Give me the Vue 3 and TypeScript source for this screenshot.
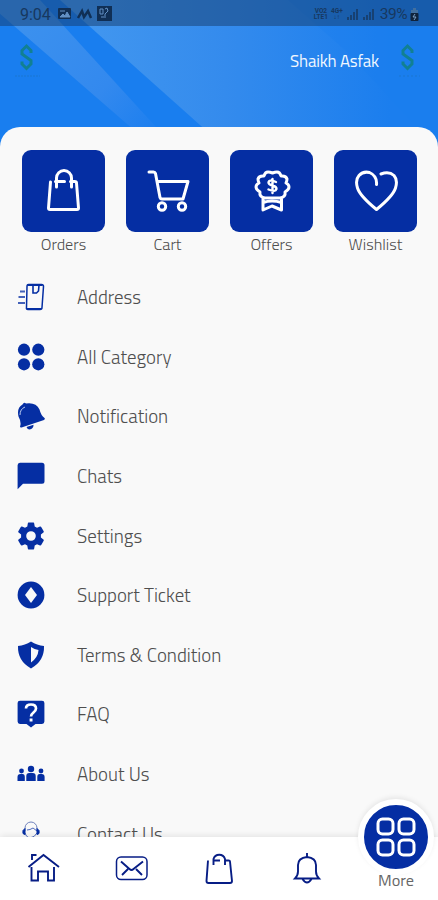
<script setup lang="ts">
interface Item {
  icon: string
  label: string
}

const tiles: Item[] = [
  { icon: 'bag', label: 'Orders' },
  { icon: 'cart', label: 'Cart' },
  { icon: 'offer', label: 'Offers' },
  { icon: 'heart', label: 'Wishlist' },
]

const rows: Item[] = [
  { icon: 'address', label: 'Address' },
  { icon: 'category', label: 'All Category' },
  { icon: 'notify', label: 'Notification' },
  { icon: 'chat', label: 'Chats' },
  { icon: 'settings', label: 'Settings' },
  { icon: 'support', label: 'Support Ticket' },
  { icon: 'terms', label: 'Terms & Condition' },
  { icon: 'faq', label: 'FAQ' },
  { icon: 'about', label: 'About Us' },
  { icon: 'contact', label: 'Contact Us' },
]
</script>

<template>
  <main class="screen">
    <header class="hero">
      <svg class="backdrop" viewBox="0 0 438 150" preserveAspectRatio="none">
        <defs>
          <linearGradient id="sheen" gradientUnits="userSpaceOnUse" x1="90" y1="0" x2="390" y2="0">
            <stop offset="0" stop-color="#4196ef" />
            <stop offset=".45" stop-color="#348bed" />
            <stop offset="1" stop-color="#1b7eee" />
          </linearGradient>
          <linearGradient id="band" gradientUnits="userSpaceOnUse" x1="20" y1="20" x2="145" y2="130">
            <stop offset="0" stop-color="#3c91ee" />
            <stop offset=".65" stop-color="#3389ee" />
            <stop offset="1" stop-color="#1f80ef" />
          </linearGradient>
        </defs>
        <rect width="438" height="150" fill="#197eef" />
        <path d="M-16 0H40L177 150H157Z" fill="url(#band)" />
        <path d="M60 0H438V150H228Z" fill="url(#sheen)" />
        <path d="M288 0H438V150Q385 93 345 50Z" fill="#1b7eee" opacity=".35" />
      </svg>
      <div class="status">
        <span class="clock">9:04</span>
        <svg class="notices" width="52" height="16" viewBox="0 0 52 16">
          <rect x="1" y="2" width="13" height="11" rx="1" fill="#102f55" />
          <path d="M3 11l3-3 2 2 2-4 3 5zM3 5h5" fill="#6290c4" stroke="#6290c4" />
          <path d="M21 12l4-7 2 6 4-6 3 7" fill="none" stroke="#102f55" stroke-width="2.500" />
          <rect x="40" y="0" width="15" height="15" fill="#102f55" />
          <path d="M43 3v5h3V3h-3M48 3l2-1 1 3-3 3v4M44 11h3" fill="none" stroke="#6290c4" />
        </svg>
        <div class="signals">
          <span class="network"><i>VO2</i><i>LTE1</i></span>
          <span class="network"><i>4G+</i><i>↓↑</i></span>
          <svg width="28" height="14" viewBox="0 0 28 14" fill="none" stroke="#17385f" stroke-width="1.500">
            <path d="M2 13v-3M5 13V8M8 13V5M11 13V2M18 13v-3M21 13V8M24 13V5M27 13V2" />
          </svg>
          <span class="percent">39%</span>
          <svg width="9" height="13" viewBox="0 0 9 13">
            <path d="M3 0h3v2h2v3H1V2h2z" fill="#416f9f" />
            <rect x=".5" y="5" width="8" height="8" rx="1" fill="#10233b" />
            <path d="M5 6L3 9h3l-2 3" stroke="#7ba0c6" fill="none" />
          </svg>
        </div>
      </div>
      <div class="profile">
        <svg class="logo" width="30" height="38" viewBox="0 0 30 38">
          <path d="M19 11V8.500L14.500 4 10 8.500V12l9 6.500V22l-4.500 4.500L10 22v-2.500" fill="none" stroke="#118093" stroke-width="3" />
          <path d="M3 34H28" stroke="#1b72bb" stroke-dasharray="2 1" opacity=".55" />
        </svg>
        <span class="name">Shaikh Asfak</span>
        <svg class="logo" width="30" height="38" viewBox="0 0 30 38">
          <path d="M19 11V8.500L14.500 4 10 8.500V12l9 6.500V22l-4.500 4.500L10 22v-2.500" fill="none" stroke="#118093" stroke-width="3" />
          <path d="M6 34H27" stroke="#1b72bb" stroke-dasharray="2 2" opacity=".55" />
        </svg>
      </div>
    </header>

    <section class="sheet">
      <div class="tiles">
        <div v-for="tile in tiles" :key="tile.label" class="tile">
          <div class="square">
            <svg width="46" height="46" viewBox="0 0 46 46" class="outline">
              <path v-if="tile.icon === 'bag'" d="M9.500 14L7.500 40q0 1.500 1.500 1.500h27q1.500 0 1.500-1.500l-2-25q0-1.500-2-1.500h-4M15.500 19v-9a7.500 7.500 0 0 1 15 0v9M14.500 13.500h9" />
              <template v-else-if="tile.icon === 'cart'">
                <path d="M4 4h4.500q1.500 0 2 1.500L15 29.500q.5 1.500 2 1.500h21l5-17.500H12" />
                <circle cx="17" cy="38.500" r="3.700" /><circle cx="37" cy="38.500" r="3.700" />
              </template>
              <template v-else-if="tile.icon === 'offer'">
                <path d="M15 8q1-4 4-4 2 0 4.500 1Q26 4 28 4q3 0 4 4 5-.5 6 3 0 2-1 4 3 1.500 3 4t-4 5q1 5-5 6H16q-6-1-5-6-4-2.500-4-5t3-4q-1-2-1-4 1-3.500 6-3z" />
                <path d="M14 31v11l9-4 9.500 4V31M14 34.500q9-3 18.500 0" />
                <path d="M27 14q-7-3-7.500.5 0 2 4 3t4 3.500q-1 3.500-8 .5M23.500 11v14" stroke-width="2.400" />
              </template>
              <path v-else d="M23.500 16.500q.8-8.500-7-12Q10 3 6 7.500 2 12 4.500 20q2.500 8 19 21.500Q40 28 42.500 20 45 12 41 7.500 36 3 28 6" />
            </svg>
          </div>
          <span>{{ tile.label }}</span>
        </div>
      </div>

      <ul class="rows">
        <li v-for="row in rows" :key="row.label">
          <svg width="28" height="28" viewBox="0 0 28 28" class="solid">
            <g v-if="row.icon === 'address'" fill="none" stroke="#052ea3">
              <path d="M11.500 1.500h13q2 0 2 2L25 24.500q0 2-2 2H11q-2 0-1.500-2l.5-21q0-2 1.500-2z" stroke-width="1.500" />
              <path d="M10.500 2h15M10 26h14" stroke-width="1.800" />
              <path d="M16 2v8h3.500l2-2 .5-6" stroke-width="1.600" />
              <path d="M3 8.500h5M1.500 14H8M1 20h7" stroke-width="1.800" opacity=".75" />
            </g>
            <g v-else-if="row.icon === 'category'">
              <circle cx="7" cy="6.700" r="6.100" /><circle cx="21.300" cy="6.700" r="6.100" />
              <circle cx="7" cy="21.300" r="6.100" /><circle cx="21.300" cy="21.300" r="6.100" />
            </g>
            <g v-else-if="row.icon === 'notify'">
              <path d="M5.500 2.500Q7-.5 9 1.500q10-1.500 13.500 6 1.500 6 5 8.500 1 1-.5 2L4.500 25.500q-2 .3-1.300-1.500Q4.500 20 1.500 14.500-.5 6 5.500 2.500z" />
              <path d="M9.500 25l7-2.300q0 4.300-4 4.800-2 0-3-2.500z" />
              <path d="M3 13q0-6 5-8" fill="none" stroke="#b5c6ed" />
            </g>
            <path v-else-if="row.icon === 'chat'" d="M3 .8h22q2.500 0 2.500 2.500v16q0 2.500-2.500 2.500H6L.6 27.300v-24Q.6.8 3 .8z" />
            <path v-else-if="row.icon === 'settings'" fill-rule="evenodd" d="M11.500.5h5q.5 0 .7 1l.5 3 2.300 1.300 3-1.200q.8-.3 1.200.4l2.500 4.300q.4.700-.3 1.200l-2.500 2v3l2.500 2q.7.500.3 1.200L24.200 23q-.4.700-1.200.4l-3-1.200-2.300 1.300-.5 3q-.2 1-.7 1h-5q-.5 0-.7-1l-.5-3L8 22.200l-3 1.200q-.8.300-1.200-.4l-2.500-4.300q-.4-.7.3-1.200l2.500-2v-3l-2.500-2q-.7-.5-.3-1.200L3.800 5q.4-.7 1.200-.4l3 1.200 2.300-1.300.5-3q.2-1 .7-1zM14 9.200a4.800 4.800 0 1 0 0 9.600 4.800 4.800 0 0 0 0-9.600z" />
            <path v-else-if="row.icon === 'support'" fill-rule="evenodd" d="M14 .6a13.400 13.400 0 1 0 0 26.800A13.400 13.400 0 0 0 14 .6zm0 5.400l6 8-6 8-6-8z" />
            <path v-else-if="row.icon === 'terms'" fill-rule="evenodd" d="M14 .6Q20 4.500 27 5q.5 15-13 22.400Q.5 20 1 5 8 4.500 14 .6zm0 5.400v15.500q7-5 7.500-12.500-4-.5-7.500-3z" />
            <g v-else-if="row.icon === 'faq'">
              <path d="M3 .7h22q2.400 0 2.400 2.400v18.500q0 2.400-2.400 2.400h-6.500L14 27.600 9.500 24H3Q.6 24 .6 21.600V3.100Q.6.7 3 .7z" />
              <path d="M9 8.500q0-4 5-4t5 4q0 2-2.500 4t-2.500 4" fill="none" stroke="#fff" stroke-width="2.700" />
              <rect x="12.600" y="18.500" width="2.900" height="3" fill="#fff" />
            </g>
            <g v-else-if="row.icon === 'about'">
              <circle cx="14" cy="9" r="3.200" /><circle cx="4.500" cy="11" r="2.400" /><circle cx="24" cy="11" r="2.400" />
              <path d="M9.300 21V16q0-3 3-3h3.400q3 0 3 3v5zM.5 21V17q0-3 3-3h2q2.300 0 2.300 3v4zM20.300 21V17q0-3 2.300-3h2q3 0 3 3v4z" />
            </g>
            <g v-else fill="none" stroke="#052ea3">
              <path d="M8 11V8a6 6 0 0 1 12 0v3" stroke="#7083bd" />
              <path d="M8 8.500v6q-3 0-2-4zM20 8.500v6q3 0 2-4z" fill="#052ea3" />
              <path d="M8 13q2 7 9 3.500L20 13M10 10q3 0 6-2l4 3" opacity=".7" />
            </g>
          </svg>
          <span>{{ row.label }}</span>
        </li>
      </ul>
    </section>

    <nav class="dock">
      <svg width="34" height="34" viewBox="0 0 34 34" class="line">
        <path d="M1.500 15L16.500 3l15.500 12M5 8V3h4.500M4.500 15v13.500h6.500v-9h10v9h6V15" />
      </svg>
      <svg width="34" height="34" viewBox="0 0 34 34" class="line">
        <rect x="1.500" y="5" width="30.500" height="22.500" rx="4.500" stroke-width="1.500" />
        <path d="M6 9.500l8.500 7.500q2 1.800 4 0L28 9.500M7 23l6-6M27 23l-6-6" />
      </svg>
      <svg width="34" height="34" viewBox="0 0 34 34" class="line">
        <path d="M6 8.500L4.500 29q0 2 2 2H28q2 0 2-2L28 9.500q0-1-1.500-1H23M11.500 13V7a6 6 0 0 1 11.500 0v6M11.500 8.500H18" />
      </svg>
      <svg width="34" height="34" viewBox="0 0 34 34" class="line">
        <path d="M5 26.500q3-3 3-7V13q0-7 9-8 9 1 9 8v6.500q0 4 3 7zM17 5V1M12.500 27q4.500 7 9 0" />
      </svg>
      <div class="more">
        <div class="disc">
          <svg width="42" height="42" viewBox="0 0 42 42" class="outline">
            <rect x="3" y="3" width="15" height="15" rx="4.500" /><rect x="24" y="3" width="15" height="15" rx="4.500" />
            <rect x="3" y="24" width="15" height="15" rx="4.500" /><rect x="24" y="24" width="15" height="15" rx="4.500" />
          </svg>
        </div>
        <span>More</span>
      </div>
    </nav>
  </main>
</template>

<style>
body {
  margin: 0;
  overflow: hidden;
}
</style>

<style scoped>
.screen {
  display: grid;
  grid-template-rows: 127px 710px 63px;
  width: 438px;
  height: 900px;
  overflow: hidden;
  color: #4e4e4e;
  font-family: "Titillium Web", Roboto, sans-serif;
  background: #f9f9f9;
}
.hero {
  position: relative;
}
.backdrop {
  position: absolute;
  width: 438px;
  height: 150px;
}
.status {
  position: relative;
  box-sizing: border-box;
  display: flex;
  align-items: center;
  height: 26px;
  padding: 2px 19px 0 20px;
  color: #17385f;
  background: rgba(20, 56, 101, .48);
  font-family: Roboto, sans-serif;
  font-weight: 400;
}
.clock {
  width: 37px;
  font-size: 16px;
}
.notices {
  overflow: visible;
}
.signals {
  display: flex;
  align-items: center;
  gap: 3px;
  margin-left: auto;
}
.network {
  display: grid;
  font: 700 6.500px/6px Roboto, sans-serif;
  text-align: center;
}
.network i {
  font-style: normal;
}
.percent {
  margin-left: 3px;
  font-size: 15.500px;
  letter-spacing: -.5px;
}
.profile {
  position: relative;
  display: flex;
  align-items: center;
  padding: 16px 15px 0 12px;
}
.name {
  margin: 0 14px 0 auto;
  color: #f0f7ff;
  font-size: 16.900px;
  line-height: 22px;
  letter-spacing: -.2px;
}
.sheet {
  position: relative;
  box-sizing: border-box;
  overflow: hidden;
  padding-top: 23px;
  border-radius: 20px 20px 0 0;
  background: #f9f9f9;
}
.tiles {
  display: flex;
  justify-content: space-between;
  padding: 0 21px 0 22px;
}
.tile {
  display: flex;
  flex-direction: column;
  width: 83px;
  text-align: center;
  font-size: 16.200px;
  line-height: 25px;
  font-weight: 300;
}
.square {
  display: grid;
  place-items: center;
  height: 82px;
  border-radius: 9px;
  background: #052ea3;
}
.outline {
  fill: none;
  stroke: #fff;
  stroke-width: 3;
  stroke-linecap: round;
  stroke-linejoin: round;
}
.solid {
  flex: none;
  fill: #052ea3;
}
.rows {
  margin: 10.500px 0 0;
  padding: 0;
  list-style: none;
}
.rows li {
  display: flex;
  align-items: center;
  gap: 32px;
  height: 59.600px;
  padding-left: 17px;
  font-size: 18.900px;
  font-weight: 300;
}
.dock {
  position: relative;
  display: flex;
  padding: 15px 0 0 27px;
  gap: 53.500px;
  background: #fff;
  box-shadow: 0 -1px 7px rgba(0, 0, 0, .1);
}
.line {
  flex: none;
  fill: none;
  stroke: #071d85;
  stroke-width: 1.900;
}
.more {
  display: flex;
  flex-direction: column;
  align-items: center;
  width: 76px;
  margin: -53px 0 0 -19px;
  color: #666;
  font-size: 16.300px;
  line-height: 18px;
}
.disc {
  box-sizing: border-box;
  display: grid;
  place-items: center;
  flex: none;
  width: 76px;
  height: 76px;
  margin-bottom: -4px;
  border: 6px solid #fff;
  border-radius: 50%;
  background: #052ea3;
  box-shadow: 0 -2px 5px rgba(0, 0, 0, .08);
}
</style>
